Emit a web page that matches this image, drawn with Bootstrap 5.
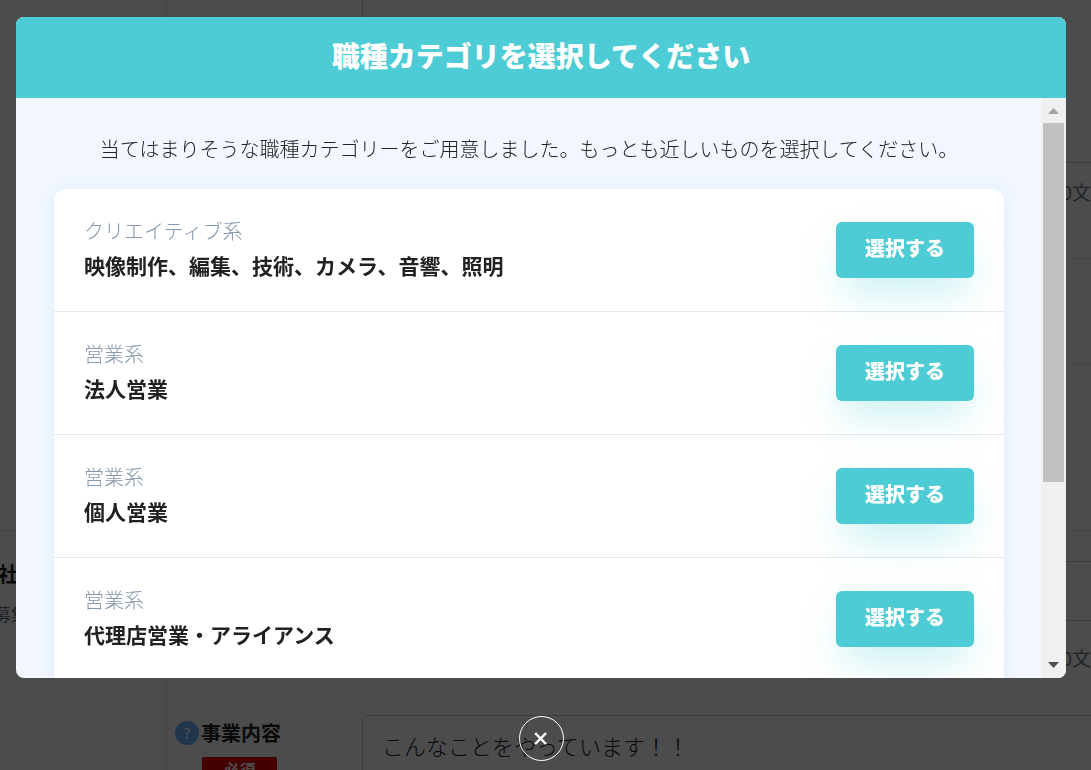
<!DOCTYPE html>
<html lang="ja">
<head>
<meta charset="utf-8">
<meta name="viewport" content="width=device-width, initial-scale=1">
<title>職種カテゴリの選択</title>
<link href="https://cdn.jsdelivr.net/npm/bootstrap@5.3.0/dist/css/bootstrap.min.css" rel="stylesheet">
<style>
  :root { --teal: #4dccd5; --ink: #222; --slate: #8497ac; }
  body { font-family: "Noto Sans CJK JP", sans-serif; color: var(--ink); height: 100vh; overflow: hidden; }

  /* form page behind the dialog */
  .side-pane { width: 167px; border-right: 1px solid #e0e0e0; padding-top: 530px; overflow: hidden; }
  .side-item { border-top: 1px solid #e6e6e6; padding-top: 27px; white-space: nowrap; }
  .side-item .inner { display: flex; flex-direction: column; width: 28px; align-items: flex-end; }
  .side-title { font-size: 20px; line-height: 32px; font-weight: 700; margin-right: 10px; }
  .side-note { font-size: 17px; line-height: 24px; margin-top: 12px; color: #6c7a8c; }
  .form-row { display: grid; grid-template-columns: 195px minmax(0, 1fr); }
  .form-row + .form-row { border-top: 1px solid #e6e6e6; }
  .row-summary { height: 258px; }
  .row-blank { height: 106px; }
  .row-tall { height: 166px; }
  .row-business { height: 240px; padding-top: 30px; }
  .label-cell { padding: 157px 0 0 8px; }
  .field { font-size: 22px; border: 1px solid #ccc; border-radius: 6px; width: calc(100% + 40px); max-width: none; resize: none; font-weight: 300; color: #222; padding: 13px 19px; }
  .field-top { height: 163px; border-top: 0; border-radius: 0 0 6px 6px; }
  .field-line { height: 60px; }
  .count { font-size: 19px; line-height: 28px; color: #6c7a8c; white-space: nowrap; text-align: right; margin-top: 15px; }
  .field-line + .count { margin: 23px 0 43px; }
  .help { width: 24px; height: 24px; border-radius: 50%; background: #71b1ff; color: #fff; font-size: 14px; font-weight: 500; margin: 3px 2px 0 0; }
  .field-label { font-size: 20px; line-height: 30px; font-weight: 700; }
  .required { background: #e60000; color: #fff; font-size: 16px; line-height: 24px; width: 75px; border-radius: 2px; margin: 9px 0 0 1px; }

  /* dialog */
  .veil { background: rgba(0, 0, 0, .7); padding: 17px 25px 9px 16px; z-index: 1050; }
  .sheet { border-radius: 8px; overflow: hidden; background: #f2f7ff; min-height: 0; }
  .sheet-head { background: var(--teal); color: #fff; padding: 17px 0 22px; }
  .sheet-head h1 { font-size: 28px; line-height: 42px; font-weight: 900; }
  .sheet-body { overflow: hidden; padding: 36px 37px 0 38px; }
  .intro { font-size: 20px; line-height: 30px; font-weight: 300; margin: 0 -10px 25px; }
  .choices { border-radius: 12px; background: #fff; box-shadow: 0 0 14px rgba(80, 170, 230, .13); padding-bottom: 30px; }
  .choice { padding: 0 30px; min-height: 122px; }
  .choice + .choice { border-top: 1px solid #e5e8eb; min-height: 123px; }
  .choice-text { padding-bottom: 4px; }
  .choice-kind { font-size: 20px; line-height: 34px; font-weight: 300; color: var(--slate); }
  .choice-name { font-size: 21px; line-height: 35px; font-weight: 700; }
  .pick { --bs-btn-color: #fff; --bs-btn-hover-color: #fff; --bs-btn-hover-bg: #3fbcc5; width: 138px; height: 56px; padding: 0 0 4px; font-size: 20px; font-weight: 900; background: var(--teal); border: 0; border-radius: 6px; box-shadow: 0 20px 40px -8px rgba(77, 204, 213, .34); }
  .rail { width: 25px; background: #f0f0f0; }
  .rail-arrow { height: 25px; }
  .rail-arrow:last-child { height: 27px; }
  .rail-thumb { flex: 0 0 68%; margin: 0 2px; background: #c1c1c1; }
  .close-round { width: 45px; height: 45px; border: 1px solid #fff; border-radius: 50%; background: transparent; margin: 38px auto 0; }
</style>
</head>
<body>
<div class="d-flex h-100">
  <aside class="side-pane flex-shrink-0">
    <div class="side-item"><div class="inner"><span class="side-title">会社</span><span class="side-note">募集</span></div></div>
  </aside>
  <main class="flex-grow-1 overflow-hidden">
    <div class="form-row row-summary">
      <div></div>
      <div>
        <textarea class="form-control field field-top" aria-label="概要"></textarea>
        <div class="count">0 / 100文</div>
      </div>
    </div>
    <div class="form-row row-blank"></div>
    <div class="form-row row-tall"></div>
    <div class="form-row row-business">
      <div class="label-cell d-flex align-items-start">
        <span class="help d-flex align-items-center justify-content-center">?</span>
        <div>
          <label class="field-label d-block" for="business">事業内容</label>
          <div class="required text-center fw-bold">必須</div>
        </div>
      </div>
      <div>
        <input class="form-control field field-line" type="text" aria-label="見出し">
        <div class="count">0 / 100文</div>
        <textarea class="form-control field" id="business">こんなことをやっています！！</textarea>
      </div>
    </div>
  </main>
</div>

<div class="veil position-fixed top-0 start-0 w-100 h-100 d-flex flex-column" role="dialog" aria-modal="true" aria-labelledby="sheetTitle">
  <section class="sheet d-flex flex-column flex-grow-1">
    <header class="sheet-head text-center"><h1 id="sheetTitle" class="m-0">職種カテゴリを選択してください</h1></header>
    <div class="d-flex flex-grow-1 overflow-hidden">
      <div class="sheet-body flex-grow-1">
        <p class="intro text-center">当てはまりそうな職種カテゴリーをご用意しました。もっとも近しいものを選択してください。</p>
        <ul class="choices list-unstyled">
          <li class="choice d-flex justify-content-between align-items-center">
            <div class="choice-text"><div class="choice-kind">クリエイティブ系</div><div class="choice-name">映像制作、編集、技術、カメラ、音響、照明</div></div>
            <button class="btn pick" type="button">選択する</button>
          </li>
          <li class="choice d-flex justify-content-between align-items-center">
            <div class="choice-text"><div class="choice-kind">営業系</div><div class="choice-name">法人営業</div></div>
            <button class="btn pick" type="button">選択する</button>
          </li>
          <li class="choice d-flex justify-content-between align-items-center">
            <div class="choice-text"><div class="choice-kind">営業系</div><div class="choice-name">個人営業</div></div>
            <button class="btn pick" type="button">選択する</button>
          </li>
          <li class="choice d-flex justify-content-between align-items-center">
            <div class="choice-text"><div class="choice-kind">営業系</div><div class="choice-name">代理店営業・アライアンス</div></div>
            <button class="btn pick" type="button">選択する</button>
          </li>
        </ul>
      </div>
      <div class="rail d-flex flex-column flex-shrink-0" aria-hidden="true">
        <div class="rail-arrow d-flex align-items-center justify-content-center"><svg width="11" height="6"><path d="M0 6 5.5 0 11 6Z" fill="#a3a3a3"/></svg></div>
        <div class="flex-grow-1 d-flex flex-column"><div class="rail-thumb"></div></div>
        <div class="rail-arrow d-flex align-items-center justify-content-center"><svg width="11" height="6"><path d="M0 0 5.5 6 11 0Z" fill="#505050"/></svg></div>
      </div>
    </div>
  </section>
  <button class="close-round d-flex align-items-center justify-content-center flex-shrink-0 p-0" type="button" aria-label="閉じる">
    <svg width="14" height="14" viewBox="0 0 14 14"><path d="M1.2 1.2 12 12M12 1.2 1.2 12" stroke="#fff" stroke-width="2.4" fill="none"/></svg>
  </button>
</div>
<script src="https://cdn.jsdelivr.net/npm/bootstrap@5.3.0/dist/js/bootstrap.bundle.min.js"></script>
</body>
</html>
